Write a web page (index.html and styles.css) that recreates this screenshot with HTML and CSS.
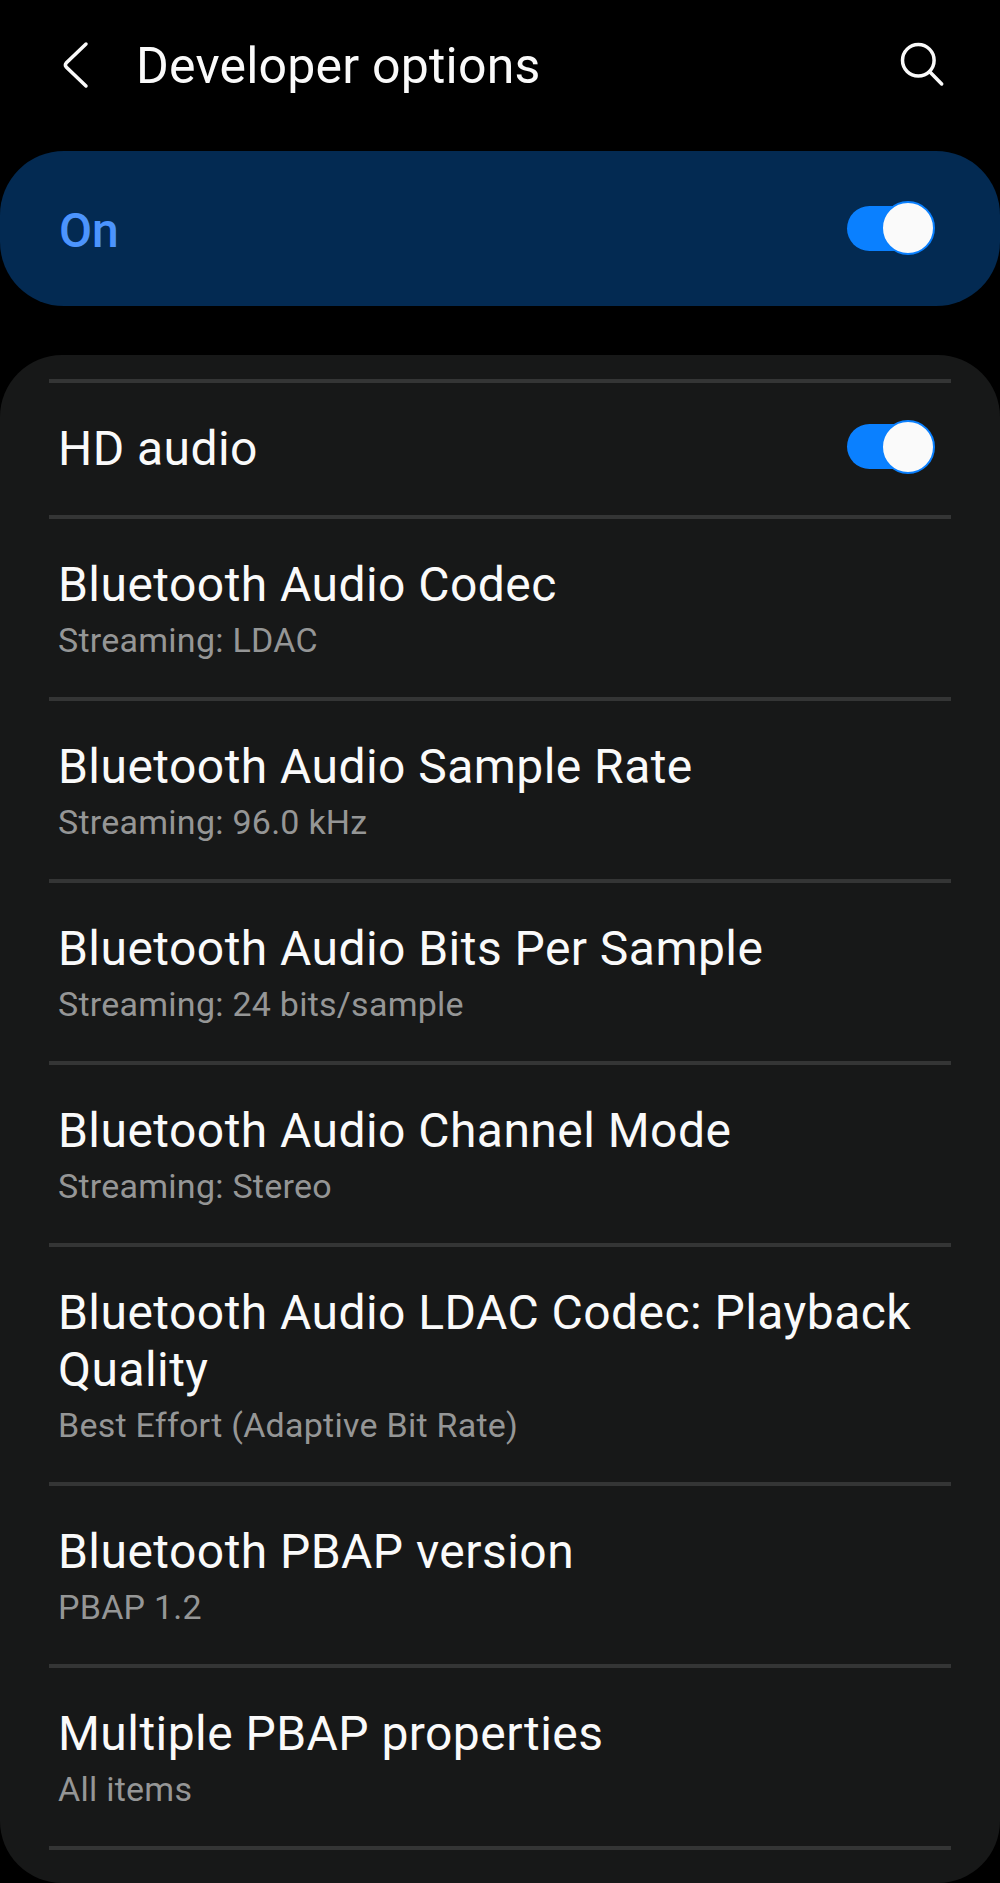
FILE: index.html
```html
<!DOCTYPE html>
<html lang="en">
<head>
  <meta charset="UTF-8">
  <meta name="viewport" content="width=device-width, initial-scale=1.0">
  <title>Developer options</title>
  <link rel="stylesheet" href="styles.css">
</head>
<body>

  <header class="header">
    <svg class="back-icon" width="30" height="50" viewBox="0 0 30 50">
      <path d="M26 4L6.2 23Q4.6 25 6.2 27L26 46" />
    </svg>
    <h1 class="header-title">Developer options</h1>
    <svg class="search-icon" width="46" height="46" viewBox="0 0 46 46">
      <circle cx="18.3" cy="18.3" r="15.8" />
      <path d="M29.7 29.7L41.7 42" />
    </svg>
  </header>

  <div class="master-switch">
    <span class="master-label">On</span>
    <span class="toggle"><span class="thumb"></span></span>
  </div>

  <main class="list">
    <div class="item item-switch">
      <div class="item-title">HD audio</div>
      <span class="toggle"><span class="thumb"></span></span>
    </div>
    <div class="item">
      <div class="item-title">Bluetooth Audio Codec</div>
      <div class="item-value">Streaming: LDAC</div>
    </div>
    <div class="item">
      <div class="item-title">Bluetooth Audio Sample Rate</div>
      <div class="item-value">Streaming: 96.0 kHz</div>
    </div>
    <div class="item">
      <div class="item-title">Bluetooth Audio Bits Per Sample</div>
      <div class="item-value">Streaming: 24 bits/sample</div>
    </div>
    <div class="item">
      <div class="item-title">Bluetooth Audio Channel Mode</div>
      <div class="item-value">Streaming: Stereo</div>
    </div>
    <div class="item">
      <div class="item-title">Bluetooth Audio LDAC Codec: Playback Quality</div>
      <div class="item-value">Best Effort (Adaptive Bit Rate)</div>
    </div>
    <div class="item">
      <div class="item-title">Bluetooth PBAP version</div>
      <div class="item-value">PBAP 1.2</div>
    </div>
    <div class="item">
      <div class="item-title">Multiple PBAP properties</div>
      <div class="item-value">All items</div>
    </div>
  </main>

</body>
</html>
```
FILE: styles.css
```css
* {
  box-sizing: border-box;
}

body {
  margin: 0;
  background-color: #000;
  color: #fafafa;
  font-family: Roboto, "Liberation Sans", sans-serif;
}

.header {
  display: flex;
  align-items: center;
  height: 151px;
  padding: 0 54px 22px 60px;
}

.header svg {
  fill: none;
  stroke: #fafafa;
  stroke-width: 3.5;
  stroke-linecap: round;
}

.header-title {
  flex: 1;
  margin: 3px 0 0 46px;
  font-size: 50px;
  font-weight: 400;
  letter-spacing: 0.2px;
  line-height: 60px;
}

.master-switch {
  display: flex;
  align-items: center;
  justify-content: space-between;
  height: 155px;
  padding: 0 68px 1px 59px;
  border-radius: 64px;
  background-color: #032a52;
}

.master-label {
  margin-top: 4px;
  color: #4c94fd;
  font-size: 48px;
  font-weight: 500;
}

/* the thumb is taller than the track */
.toggle {
  display: flex;
  align-items: center;
  justify-content: flex-end;
  width: 85px;
  height: 45px;
  border-radius: 23px;
  background-color: #0a80ff;
}

.thumb {
  flex: none;
  width: 54px;
  height: 54px;
  margin-right: -3px;
  border: 2px solid #0a80ff;
  border-radius: 50%;
  background-color: #fafafa;
}

.list {
  height: 1528px;
  margin-top: 49px;
  padding: 24px 49px 0;
  border-radius: 62px;
  background-color: #171818;
}

.item {
  padding: 37px 10px 37px 9px;
  border-bottom: 4px solid #343535;
}

.item-switch {
  display: flex;
  align-items: center;
  justify-content: space-between;
  height: 140px;
  padding: 0 19px 5px 9px;
  border-top: 4px solid #343535;
}

.item-switch .item-title {
  margin-top: 3px;
}

.item-title {
  font-size: 48px;
  letter-spacing: 0.45px;
  line-height: 57px;
}

.item-value {
  margin-top: 7px;
  color: #959696;
  font-size: 34px;
  letter-spacing: 0.25px;
  line-height: 40px;
}
```
